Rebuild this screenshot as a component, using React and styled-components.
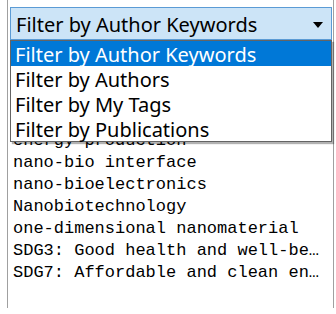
import { useState } from "react";
import styled, { createGlobalStyle } from "styled-components";

const GlobalStyle = createGlobalStyle`
  html, body {
    margin: 0;
    padding: 0;
    background: #ffffff;
  }
  * {
    box-sizing: border-box;
  }
`;

const Page = styled.div`
  position: relative;
  width: 336px;
  height: 314px;
  overflow: hidden;
  background: #ffffff;
`;

const Panel = styled.div`
  margin-left: 7px;
  width: 327px;
  height: 308px;
  border-left: 1px solid #a0a0a0;
  border-right: 1px solid #a0a0a0;
  display: flex;
  flex-direction: column;
`;

const Select = styled.div`
  margin: 7px 0 0 2px;
  width: 322px;
  height: 33px;
  background: #cce4f7;
  border: 1px solid #5b9bd5;
  display: flex;
  align-items: center;
  justify-content: space-between;
  padding: 1px 8px 0 5px;
  font-family: "Noto Sans", "Open Sans", sans-serif;
  font-size: 20px;
  color: #000000;
`;

const Arrow = styled.span`
  width: 0;
  height: 0;
  border-left: 5px solid transparent;
  border-right: 5px solid transparent;
  border-top: 6px solid #000000;
  margin-top: 2px;
`;

const List = styled.ul`
  list-style: none;
  margin: 0;
  padding: 2px 0 0 5px;
  font-family: "Liberation Mono", monospace;
  font-size: 17px;
  color: #000000;
`;

const Item = styled.li`
  width: 313px;
  height: 22px;
  line-height: 22px;
  white-space: nowrap;
  overflow: hidden;
  text-overflow: ellipsis;
`;

const Dropdown = styled.ul`
  position: absolute;
  top: 40px;
  left: 10px;
  width: 322px;
  margin: 0;
  padding: 0;
  list-style: none;
  background: #ffffff;
  border: 1px solid #646464;
  box-shadow: 2px 2px 1px rgba(0, 0, 0, 0.3);
  font-family: "Noto Sans", "Open Sans", sans-serif;
  font-size: 20px;
`;

const Option = styled.li`
  height: 25px;
  line-height: 27px;
  padding-left: 4px;
  white-space: nowrap;
  background: ${(p) => (p.$active ? "#0078d7" : "#ffffff")};
  color: ${(p) => (p.$active ? "#ffffff" : "#000000")};
`;

const options = [
  "Filter by Author Keywords",
  "Filter by Authors",
  "Filter by My Tags",
  "Filter by Publications",
];

const keywords = [
  "Biosensors",
  "carbon nanotubes",
  "drug delivery",
  "electrochemistry",
  "energy production",
  "nano-bio interface",
  "nano-bioelectronics",
  "Nanobiotechnology",
  "one-dimensional nanomaterial",
  "SDG3: Good health and well-being",
  "SDG7: Affordable and clean energy",
];

const App = () => {
  const [active] = useState(0);

  return (
    <>
      <GlobalStyle />
      <Page>
        <Panel>
          <Select>
            <span>{options[active]}</span>
            <Arrow />
          </Select>
          <List>
            {keywords.map((k) => (
              <Item key={k}>{k}</Item>
            ))}
          </List>
        </Panel>
        <Dropdown>
          {options.map((o, i) => (
            <Option key={o} $active={i === active}>
              {o}
            </Option>
          ))}
        </Dropdown>
      </Page>
    </>
  );
};

export default App;
